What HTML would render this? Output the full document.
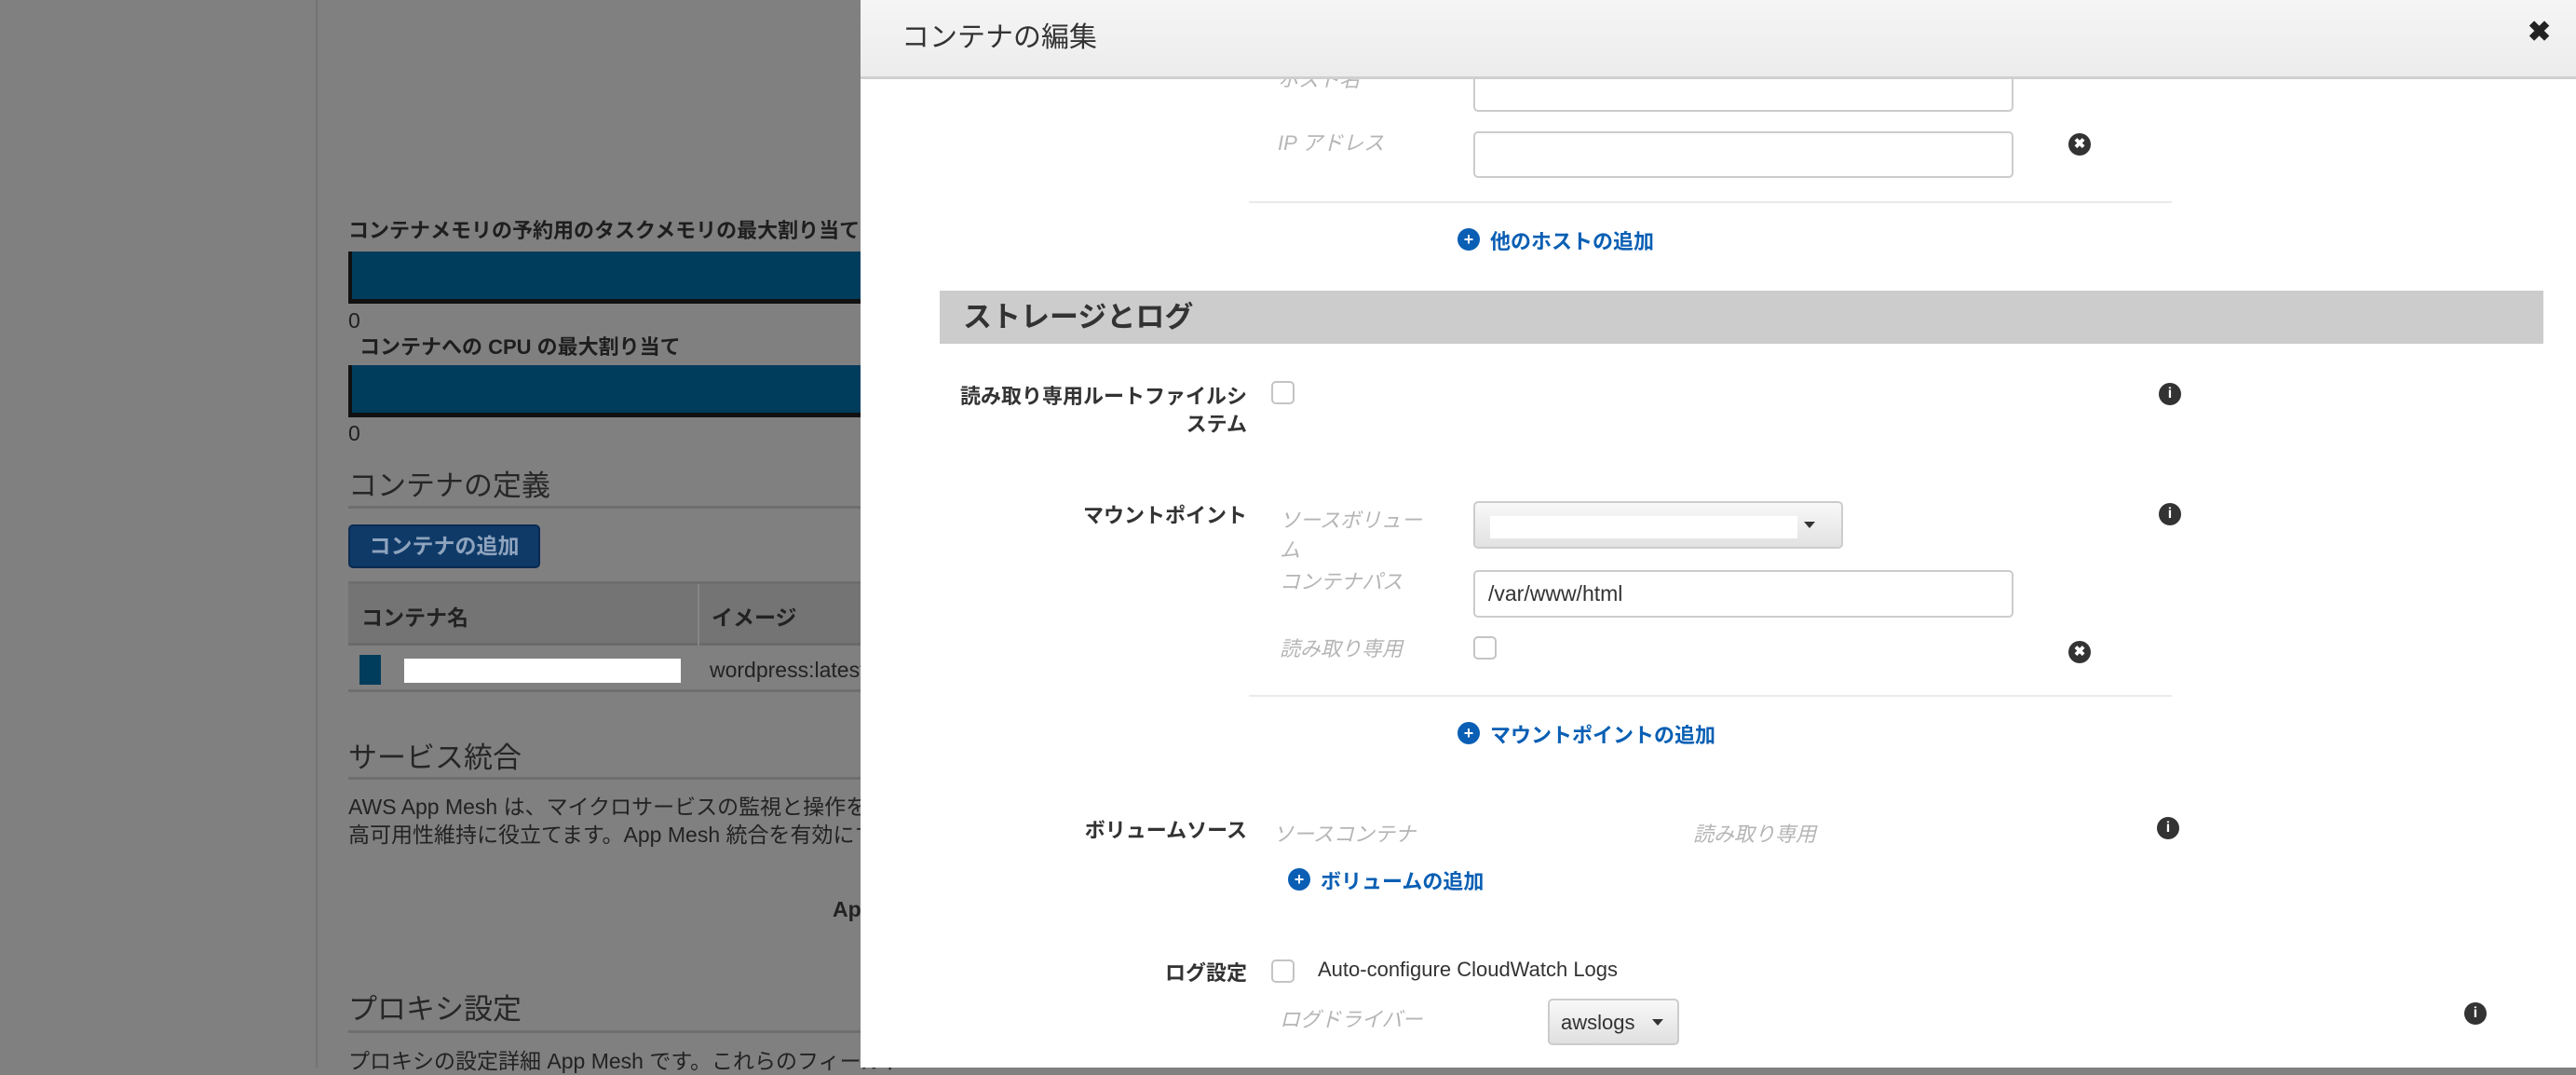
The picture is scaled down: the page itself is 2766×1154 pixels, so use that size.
<!DOCTYPE html>
<html><head><meta charset="utf-8"><style>
*{margin:0;padding:0;box-sizing:border-box}
body{width:2766px;height:1146px;overflow:hidden;position:relative;background:#808080;font-family:"Liberation Sans","Noto Sans CJK JP",sans-serif;color:#222}
.a{position:absolute;white-space:nowrap}
.hr{position:absolute;height:3px;background:#6e6e6e}
.m{position:absolute;left:924px;top:0;width:1842px;height:1146px;background:#fff}
.lbl{position:absolute;font-weight:bold;font-size:22px;color:#333;text-align:right;white-space:nowrap}
.fl{position:absolute;font-style:italic;font-size:22px;color:#b5b5b5;white-space:nowrap}
.in{position:absolute;border:2px solid #ccc;border-radius:5px;background:#fff}
.cb{position:absolute;width:25px;height:25px;border:2px solid #c4c4c4;border-radius:5px;background:#fff}
.lnk{position:absolute;color:#0a5fb4;font-weight:bold;font-size:22px;white-space:nowrap}
.ic{position:absolute;width:24px;height:24px;border-radius:50%;color:#fff;font-weight:bold;font-size:18px;line-height:24px;text-align:center}
</style></head><body>
<div style="position:absolute;left:339px;top:0;width:2px;height:1146px;background:#737373"></div>
<div class="a" style="left:374px;top:230px;font-size:22px;font-weight:bold;color:#1e1e1e">コンテナメモリの予約用のタスクメモリの最大割り当て</div>
<div style="position:absolute;left:374px;top:270px;width:550px;height:56px;background:#003c5c;border-left:4px solid #111;border-bottom:5px solid #111"></div>
<div class="a" style="left:374px;top:331px;font-size:23px;color:#1e1e1e">0</div>
<div class="a" style="left:386px;top:355px;font-size:22px;font-weight:bold;color:#1e1e1e">コンテナへの CPU の最大割り当て</div>
<div style="position:absolute;left:374px;top:392px;width:550px;height:56px;background:#003c5c;border-left:4px solid #111;border-bottom:5px solid #111"></div>
<div class="a" style="left:374px;top:452px;font-size:23px;color:#1e1e1e">0</div>
<div class="a" style="left:374px;top:496px;font-size:31px;color:#262626">コンテナの定義</div>
<div class="hr" style="left:374px;top:543px;width:550px"></div>
<div style="position:absolute;left:374px;top:563px;width:206px;height:47px;background:#0f3a68;border:2px solid #0a2b52;border-radius:5px;color:#8ea3bd;font-size:23px;font-weight:bold;line-height:43px;text-align:center">コンテナの追加</div>
<div class="hr" style="left:374px;top:624px;width:550px"></div>
<div style="position:absolute;left:374px;top:627px;width:550px;height:66px;background:#747474;border-bottom:3px solid #6a6a6a"></div>
<div style="position:absolute;left:749px;top:627px;width:2px;height:66px;background:#858585"></div>
<div class="a" style="left:388px;top:644px;font-size:23px;font-weight:bold;color:#222">コンテナ名</div>
<div class="a" style="left:764px;top:644px;font-size:23px;font-weight:bold;color:#222">イメージ</div>
<div style="position:absolute;left:386px;top:703px;width:23px;height:32px;background:#003c5c"></div>
<div style="position:absolute;left:434px;top:707px;width:297px;height:26px;background:#fff"></div>
<div class="a" style="left:762px;top:706px;font-size:23px;color:#222">wordpress:latest</div>
<div class="hr" style="left:374px;top:740px;width:550px"></div>
<div class="a" style="left:374px;top:788px;font-size:31px;color:#262626">サービス統合</div>
<div class="hr" style="left:374px;top:834px;width:550px"></div>
<div class="a" style="left:374px;top:847px;font-size:23px;color:#222">AWS App Mesh は、マイクロサービスの監視と操作を容易にし</div>
<div class="a" style="left:374px;top:877px;font-size:23px;color:#222">高可用性維持に役立てます。App Mesh 統合を有効にすると</div>
<div class="a" style="left:894px;top:963px;font-size:23px;font-weight:bold;color:#222">App</div>
<div class="a" style="left:374px;top:1058px;font-size:31px;color:#262626">プロキシ設定</div>
<div class="hr" style="left:374px;top:1106px;width:550px"></div>
<div class="a" style="left:374px;top:1120px;font-size:23px;color:#222">プロキシの設定詳細 App Mesh です。これらのフィールド</div>

<div class="m"></div>
<div class="fl" style="left:1372px;top:68px;">ホスト名</div>
<div class="in" style="left:1582px;top:70px;width:580px;height:50px"></div>
<div style="position:absolute;left:924px;top:0;width:1842px;height:85px;background:linear-gradient(#f5f5f5,#ececec);border-bottom:3px solid #cfcfcf"></div>
<div class="a" style="left:968px;top:15px;font-size:30px;color:#333">コンテナの編集</div>
<div class="a" style="left:2714px;top:17px;font-size:30px;font-weight:bold;color:#222">✖</div>
<div class="fl" style="left:1372px;top:136px">IP アドレス</div>
<div class="in" style="left:1582px;top:141px;width:580px;height:50px"></div>
<div class="ic" style="left:2221px;top:143px;background:#333;font-size:15px">✖</div>
<div style="position:absolute;left:1341px;top:216px;width:991px;height:2px;background:#eaeaea"></div>
<div class="ic" style="left:1565px;top:245px;background:#0a5fb4">+</div>
<div class="lnk" style="left:1600px;top:242px">他のホストの追加</div>
<div style="position:absolute;left:1009px;top:312px;width:1722px;height:57px;background:#ccc"></div>
<div class="a" style="left:1034px;top:315px;font-size:31px;font-weight:bold;color:#333">ストレージとログ</div>
<div class="lbl" style="right:1427px;top:408px">読み取り専用ルートファイルシ</div>
<div class="lbl" style="right:1427px;top:438px">ステム</div>
<div class="cb" style="left:1365px;top:409px"></div>
<div class="ic" style="left:2318px;top:411px;background:#333;font-size:16px">i</div>
<div class="lbl" style="right:1427px;top:536px">マウントポイント</div>
<div class="fl" style="left:1374px;top:541px">ソースボリュー</div>
<div class="fl" style="left:1374px;top:573px">ム</div>
<div class="in" style="left:1582px;top:538px;width:397px;height:51px;background:linear-gradient(#f8f8f8,#e2e2e2)"><div style="position:absolute;left:16px;top:14px;width:330px;height:24px;background:#fff"></div><div style="position:absolute;left:353px;top:20px;border-left:6px solid transparent;border-right:6px solid transparent;border-top:7px solid #333"></div></div>
<div class="ic" style="left:2318px;top:540px;background:#333;font-size:16px">i</div>
<div class="fl" style="left:1374px;top:607px">コンテナパス</div>
<div class="in" style="left:1582px;top:612px;width:580px;height:51px"><div class="a" style="left:14px;top:10px;font-size:23px;color:#333">/var/www/html</div></div>
<div class="fl" style="left:1374px;top:679px">読み取り専用</div>
<div class="cb" style="left:1582px;top:683px"></div>
<div class="ic" style="left:2221px;top:688px;background:#333;font-size:15px">✖</div>
<div style="position:absolute;left:1341px;top:746px;width:991px;height:2px;background:#eaeaea"></div>
<div class="ic" style="left:1565px;top:775px;background:#0a5fb4">+</div>
<div class="lnk" style="left:1600px;top:772px">マウントポイントの追加</div>
<div class="lbl" style="right:1427px;top:874px">ボリュームソース</div>
<div class="fl" style="left:1367px;top:878px">ソースコンテナ</div>
<div class="fl" style="left:1818px;top:878px">読み取り専用</div>
<div class="ic" style="left:2316px;top:877px;background:#333;font-size:16px">i</div>
<div class="ic" style="left:1383px;top:932px;background:#0a5fb4">+</div>
<div class="lnk" style="left:1418px;top:929px">ボリュームの追加</div>
<div class="lbl" style="right:1427px;top:1027px">ログ設定</div>
<div class="cb" style="left:1365px;top:1030px"></div>
<div class="a" style="left:1415px;top:1028px;font-size:22px;color:#333">Auto-configure CloudWatch Logs</div>
<div class="fl" style="left:1374px;top:1077px">ログドライバー</div>
<div class="in" style="left:1662px;top:1072px;width:141px;height:50px;background:linear-gradient(#f8f8f8,#e0e0e0)"><div class="a" style="left:12px;top:11px;font-size:22px;color:#333">awslogs</div><div style="position:absolute;left:110px;top:20px;border-left:6px solid transparent;border-right:6px solid transparent;border-top:7px solid #333"></div></div>
<div class="ic" style="left:2646px;top:1076px;background:#333;font-size:16px">i</div>
</body></html>
